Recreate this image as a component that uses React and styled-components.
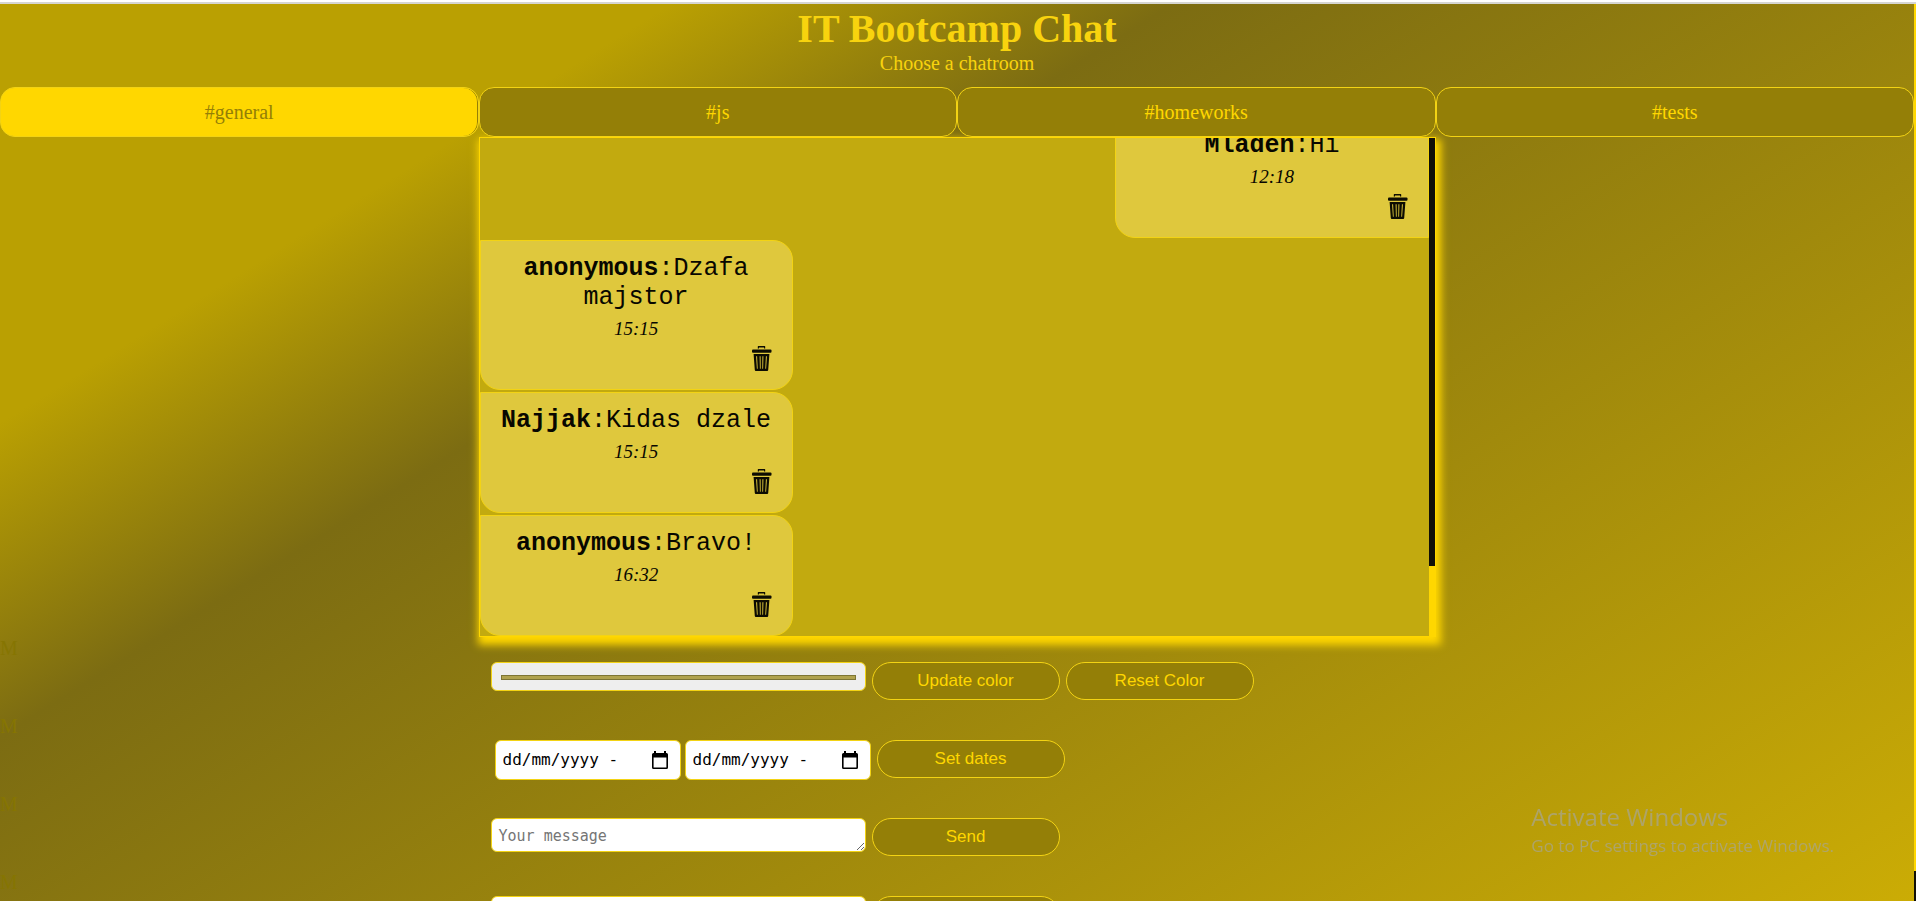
import React from "react";
import styled, { createGlobalStyle } from "styled-components";

const gold = "#ffd700";
const line = "#f3d314";
const olive = "#947f07";

const GlobalStyle = createGlobalStyle`
  * { box-sizing: border-box; }
  body {
    margin: 0;
    font: 20px/23px "Liberation Serif", "Times New Roman", serif;
    color: ${gold};
  }
`;

const Screen = styled.div`
  display: flex;
  flex-direction: column;
  height: 100vh;
  overflow: hidden;
`;

const TopEdge = styled.div`
  flex: none;
  height: 4px;
  background: #fff;
  border-bottom: 2px solid #d6d6d2;
`;

const Viewport = styled.div`
  flex: 1;
  min-height: 0;
  display: flex;
  background: linear-gradient(148deg, #baa002 0%, #baa002 20%, #7c6c12 35%, #cbac05 100%);
`;

const Page = styled.main`
  flex: 1;
  min-width: 0;
  overflow: hidden;
`;

const PageScroll = styled.div`
  flex: none;
  width: 2px;
  display: flex;
  flex-direction: column;
  justify-content: flex-end;
  background: ${gold};
`;

const PageThumb = styled.div`
  height: 30px;
  background: #111008;
`;

const Header = styled.header`
  text-align: center;
  padding: 2px 0 12px;
  color: #f8d30e;
`;

const Title = styled.h1`
  margin: 0;
  font-size: 40px;
  line-height: 46px;
`;

const Subtitle = styled.p`
  margin: 0;
`;

const Rooms = styled.nav`
  display: grid;
  grid-template-columns: repeat(4, 1fr);
`;

const Room = styled.button`
  height: 50px;
  padding: 0;
  border: 1px solid ${line};
  border-radius: 15px;
  font: inherit;
  background: ${(p) => (p.$active ? gold : olive)};
  color: ${(p) => (p.$active ? "#947f07" : gold)};
  box-shadow: ${(p) => (p.$active ? `inset -1px 0 0 ${olive}` : "none")};
`;

const Chat = styled.section`
  display: flex;
  width: 50%;
  height: 500px;
  margin: 0 auto;
  border: 1px solid ${gold};
  background: #c2aa0f;
  box-shadow: 2px 5px 8px 3px ${gold};
`;

const Messages = styled.ul`
  flex: 1;
  min-width: 0;
  margin: 0;
  padding: 0;
  list-style: none;
  overflow: hidden;
  display: flex;
  flex-direction: column;
  justify-content: flex-end;
  gap: 2px;
`;

const Bubble = styled.li`
  flex: none;
  width: 33%;
  display: flex;
  flex-direction: column;
  padding: 13px 18px 18px;
  border: 1px solid ${line};
  border-radius: ${(p) => (p.$own ? "20px 0 0 20px" : "0 20px 20px 20px")};
  align-self: ${(p) => (p.$own ? "flex-end" : "flex-start")};
  background: #dfc83d;
  color: #080700;
  text-align: center;
`;

const Text = styled.p`
  margin: 0;
  font: 25px/29px "Liberation Mono", "Courier New", monospace;
`;

const Time = styled.time`
  margin-top: 5px;
  font-size: 19px;
  font-style: italic;
`;

const Delete = styled.button`
  align-self: flex-end;
  margin-top: 6px;
  padding: 0;
  border: 0;
  background: none;
  line-height: 0;
  color: #0d0c02;
`;

const ChatScroll = styled.div`
  flex: none;
  width: 6px;
  background: ${gold};
`;

const ChatThumb = styled.div`
  height: 86%;
  background: #111008;
`;

const Row = styled.form`
  display: grid;
  grid-template-columns: 25% 1fr;
  height: 78px;
`;

const Mark = styled.label`
  color: #867502;
`;

const Controls = styled.div`
  display: flex;
  align-items: flex-start;
  gap: 6px;
  padding: 25px 0 0 ${(p) => (p.$inset ? "16px" : "12px")};
`;

const fieldBox = `
  border: 1px solid ${line};
  border-radius: 6px;
  background: #fff;
  font: 15px/18px "DejaVu Sans Mono", monospace;
  color: #000;
`;

const ColorField = styled.input`
  ${fieldBox}
  width: 375px;
  height: 29px;
  padding: 12px 9px 10px;
  background: #eee;
  appearance: none;
  &::-webkit-color-swatch-wrapper { padding: 0; }
  &::-webkit-color-swatch { border: 1px solid #7d7535; border-radius: 0; }
`;

const Dates = styled.div`
  display: flex;
  gap: 4px;
`;

const DateBox = styled.div`
  ${fieldBox}
  display: flex;
  align-items: center;
  justify-content: space-between;
  width: 186px;
  height: 40px;
  padding: 0 12px 0 7px;
  font-size: 16px;
`;

const DateInput = styled.input`
  flex: 1;
  min-width: 0;
  padding: 0;
  border: 0;
  background: none;
  font: inherit;
  color: inherit;
`;

const Picker = styled.button`
  padding: 0;
  border: 0;
  background: none;
  line-height: 0;
  color: #000;
`;

const MessageField = styled.textarea`
  ${fieldBox}
  width: 375px;
  height: 34px;
  padding: 8px 7px 6px;
  resize: both;
  overflow: hidden;
  &::placeholder { color: #757575; }
`;

const NameField = styled.input`
  ${fieldBox}
  width: 375px;
  height: 34px;
  padding: 7px;
`;

const Action = styled.button`
  width: 188px;
  height: 38px;
  padding: 0;
  border: 1px solid ${line};
  border-radius: 19px;
  background: ${olive};
  color: ${gold};
  font: 17px/20px "Liberation Sans", Arial, sans-serif;
`;

const Watermark = styled.aside`
  position: fixed;
  right: 82px;
  bottom: 43px;
  font: 17px/24px "Open Sans", "Segoe UI", sans-serif;
  color: rgba(168, 165, 140, 0.75);
  pointer-events: none;
`;

const WatermarkTitle = styled.div`
  font-size: 24px;
  line-height: 34px;
`;

const TrashIcon = () => (
  <svg width="25" height="25" viewBox="0 0 25 25" fill="currentColor">
    <path d="M9.300 0h6.400q.5 0 .5.500v2h-1.200v-1H10v1H8.800v-2q0-.5.500-.5z" />
    <rect x="3" y="3.600" width="19.500" height="3.200" rx="1" />
    <path
      fillRule="evenodd"
      d="M4.600 8h15.800L19.200 24q-.1 1-1 1H6.800q-.9 0-1-1zM7.100 10.200l.8 12.600h.8l-.6-12.600zM10.600 10.200l.3 12.600h.8l-.1-12.600zM13.400 10.200l-.1 12.600h.8l.3-12.600zM16.900 10.200l-.6 12.600h.8l.8-12.600z"
    />
  </svg>
);

const CalendarIcon = () => (
  <svg width="16" height="18" viewBox="0 0 16 18" fill="currentColor">
    <path
      fillRule="evenodd"
      d="M2 0h2v2h8V0h2v2h.500Q16 2 16 3.500v13Q16 18 14.500 18h-13Q0 18 0 16.500v-13Q0 2 1.500 2H2zM1.600 6.500V16.400h12.800V6.500z"
    />
  </svg>
);

const rooms = ["#general", "#js", "#homeworks", "#tests"];

const messages = [
  { author: "Mladen", text: "Hi", time: "12:18", own: true },
  { author: "anonymous", text: "Dzafa majstor", time: "15:15" },
  { author: "Najjak", text: "Kidas dzale", time: "15:15" },
  { author: "anonymous", text: "Bravo!", time: "16:32" },
];

const DateField = ({ id, label }) => (
  <DateBox>
    <DateInput id={id} aria-label={label} defaultValue="dd/mm/yyyy -" />
    <Picker type="button" aria-label={`Pick ${label}`}>
      <CalendarIcon />
    </Picker>
  </DateBox>
);

export default function App() {
  return (
    <Screen>
      <GlobalStyle />
      <TopEdge />
      <Viewport>
        <Page>
          <Header>
            <Title>IT Bootcamp Chat</Title>
            <Subtitle>Choose a chatroom</Subtitle>
          </Header>
          <Rooms>
            {rooms.map((room, i) => (
              <Room key={room} type="button" $active={i === 0}>
                {room}
              </Room>
            ))}
          </Rooms>
          <Chat>
            <Messages>
              {messages.map((m, i) => (
                <Bubble key={i} $own={m.own}>
                  <Text>
                    <b>{m.author}</b>:{m.text}
                  </Text>
                  <Time>{m.time}</Time>
                  <Delete type="button" aria-label="Delete message">
                    <TrashIcon />
                  </Delete>
                </Bubble>
              ))}
            </Messages>
            <ChatScroll>
              <ChatThumb />
            </ChatScroll>
          </Chat>
          <Row>
            <Mark htmlFor="color">M</Mark>
            <Controls>
              <ColorField id="color" type="color" defaultValue="#b0a24e" />
              <Action type="button">Update color</Action>
              <Action type="button">Reset Color</Action>
            </Controls>
          </Row>
          <Row>
            <Mark htmlFor="from">M</Mark>
            <Controls $inset>
              <Dates>
                <DateField id="from" label="start date" />
                <DateField id="to" label="end date" />
              </Dates>
              <Action type="button">Set dates</Action>
            </Controls>
          </Row>
          <Row>
            <Mark htmlFor="message">M</Mark>
            <Controls>
              <MessageField id="message" placeholder="Your message" />
              <Action type="button">Send</Action>
            </Controls>
          </Row>
          <Row>
            <Mark htmlFor="name">M</Mark>
            <Controls>
              <NameField id="name" />
              <Action type="button" aria-label="Update name" />
            </Controls>
          </Row>
        </Page>
        <PageScroll>
          <PageThumb />
        </PageScroll>
      </Viewport>
      <Watermark>
        <WatermarkTitle>Activate Windows</WatermarkTitle>
        Go to PC settings to activate Windows.
      </Watermark>
    </Screen>
  );
}
